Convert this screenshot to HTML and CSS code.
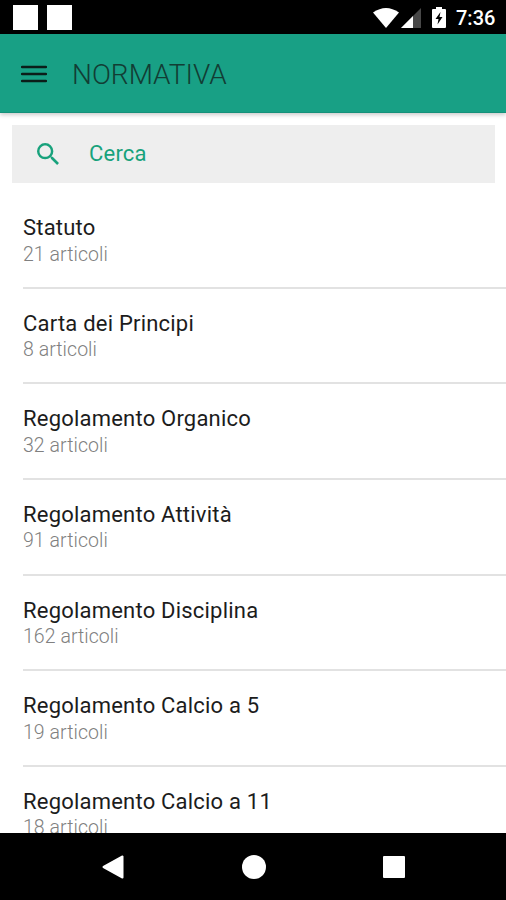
FILE: index.html
```html
<!DOCTYPE html>
<html lang="it">
<head>
<meta charset="utf-8">
<title>Normativa</title>
<link rel="stylesheet" href="styles.css">
</head>
<body>
<div class="status">
  <span class="square"></span><span class="square"></span>
  <svg class="wifi" width="26" height="20" viewBox="0 0 26 20"><path d="M0 4.500Q13-4.500 26 4.500L13 20Z" fill="#fff"/></svg>
  <svg class="signal" width="20" height="20" viewBox="0 0 20 20"><path d="M0 20L20 0V20Z" fill="#484848"/><path d="M0 20L12 8V20Z" fill="#fff"/></svg>
  <svg class="battery" width="14" height="21" viewBox="0 0 14 21"><path d="M4 0H10V2H13Q14 2 14 3V20Q14 21 13 21H1Q0 21 0 20V3Q0 2 1 2H4Z" fill="#fff"/><path d="M8.500 5L3.500 12H6.500L5.500 17.500L10.500 10H7.500Z" fill="#000"/></svg>
  <span class="time">7:36</span>
</div>
<header class="bar">
  <svg class="menu" width="26" height="18" viewBox="0 0 26 18"><path d="M1 2H25M1 9H25M1 16H25" stroke="#0b1d19" stroke-width="2.300" stroke-linecap="round"/></svg>
  <h1>NORMATIVA</h1>
</header>
<main>
  <div class="search">
    <svg width="22" height="22" viewBox="3 3 17.500 17.500"><path fill="#18a27c" d="M15.500 14h-.79l-.28-.27A6.470 6.470 0 0 0 16 9.500 6.500 6.500 0 1 0 9.500 16c1.610 0 3.090-.59 4.230-1.570l.27.28v.79l5 4.990L20.490 19l-4.990-5zm-6 0C7.010 14 5 11.990 5 9.500S7.010 5 9.500 5 14 7.010 14 9.500 11.990 14 9.500 14z"/></svg>
    <span>Cerca</span>
  </div>
  <ul>
    <li><b>Statuto</b><small>21 articoli</small></li>
    <li><b>Carta dei Principi</b><small>8 articoli</small></li>
    <li><b>Regolamento Organico</b><small>32 articoli</small></li>
    <li><b>Regolamento Attività</b><small>91 articoli</small></li>
    <li><b>Regolamento Disciplina</b><small>162 articoli</small></li>
    <li><b>Regolamento Calcio a 5</b><small>19 articoli</small></li>
    <li><b>Regolamento Calcio a 11</b><small>18 articoli</small></li>
  </ul>
</main>
<nav>
  <svg width="22" height="24" viewBox="0 0 22 24"><path d="M1.500 12L20.500 1.500V22.500Z" fill="#fff" stroke="#fff" stroke-width="2" stroke-linejoin="round"/></svg>
  <svg width="24" height="24" viewBox="0 0 24 24"><circle cx="12" cy="12" r="12" fill="#fff"/></svg>
  <svg width="22" height="22" viewBox="0 0 22 22"><rect width="22" height="22" rx="1" fill="#fff"/></svg>
</nav>
</body>
</html>
```
FILE: styles.css
```css
* { box-sizing: border-box; }
body { margin: 0; width: 506px; height: 900px; display: flex; flex-direction: column; overflow: hidden; background: #fff; font-family: Roboto, sans-serif; }
.status { height: 34px; flex: none; background: #000; display: flex; align-items: center; padding: 1px 11px 0 13px; }
.square { width: 25px; height: 25px; background: #fff; margin-right: 9px; }
.wifi { margin-left: auto; }
.signal { margin-left: 2px; }
.battery { margin-left: 11px; }
.time { width: 39px; margin-left: 10px; color: #fff; font-size: 20px; font-weight: 500; white-space: nowrap; }
.bar { height: 79px; flex: none; background: #18a085; display: flex; align-items: center; padding-left: 21px; border-bottom: 1px solid #15917a; box-shadow: 0 2px 4px rgba(0,0,0,.2); position: relative; }
.menu { margin-top: 1px; }
h1 { margin: 2px 0 0 25px; font-size: 28px; font-weight: 300; color: #123d34; }
main { flex: 1; min-height: 0; overflow: hidden; }
.search { margin: 12px 11px 0 12px; height: 58px; background: #eee; display: flex; align-items: center; padding-left: 25px; color: #18a27c; font-size: 22px; letter-spacing: .2px; }
.search span { margin: 0 0 2px 30px; }
ul { list-style: none; margin: 10.200px 0 0; padding: 0 0 0 23px; }
li { height: 95.600px; border-bottom: 2px solid #e2e2e2; padding-top: 21px; }
b, small { display: block; white-space: nowrap; }
b { font-size: 22px; line-height: 27.500px; font-weight: 400; letter-spacing: .21px; color: #1c1c1c; }
small { font-size: 19.500px; line-height: 25px; font-weight: 300; letter-spacing: .05px; color: #808080; }
nav { height: 67px; flex: none; background: #000; display: flex; align-items: center; justify-content: space-between; padding: 0 101px 0 102px; }
```
